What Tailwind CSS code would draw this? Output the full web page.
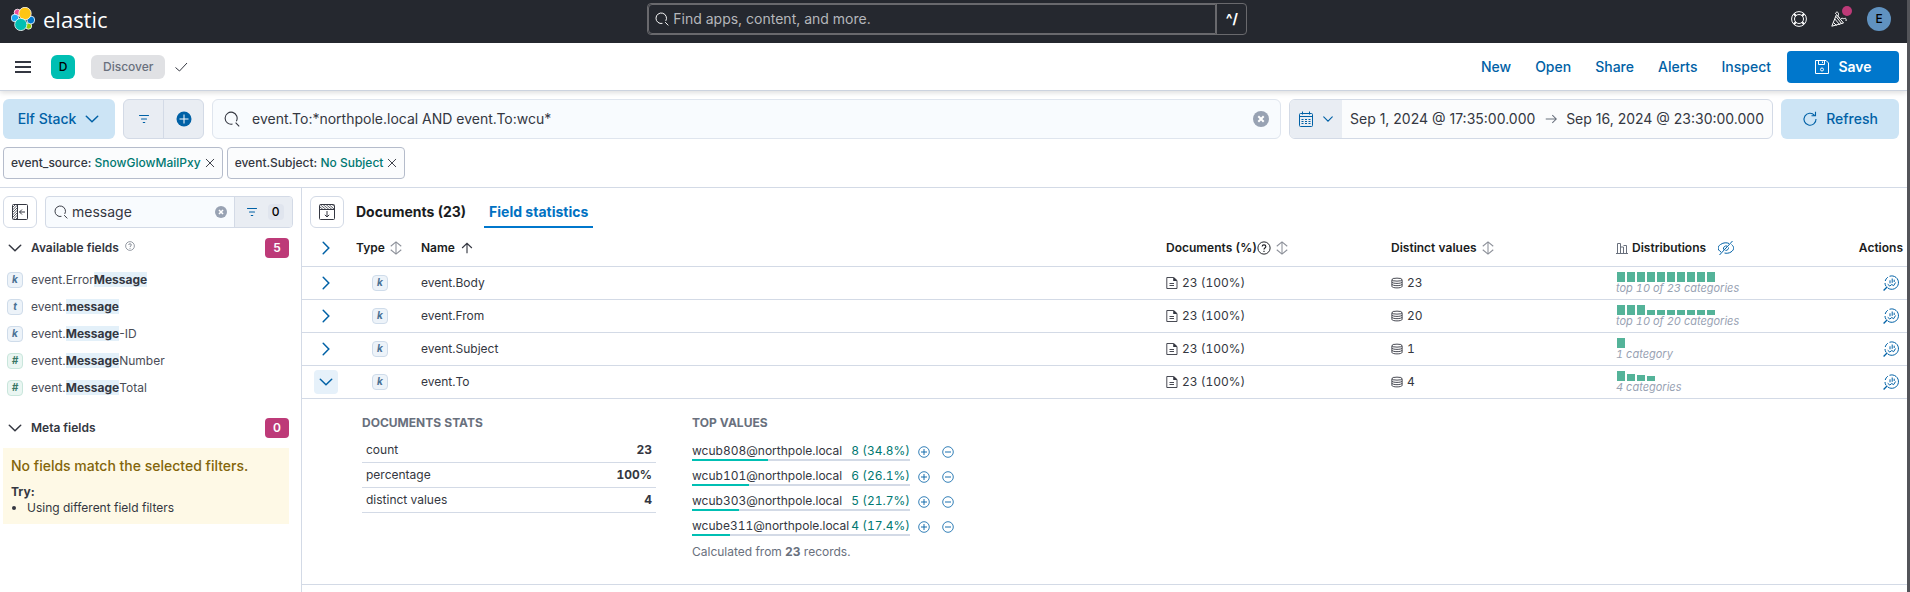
<!DOCTYPE html>
<html lang="en">
<head>
<meta charset="utf-8">
<title>Discover - Elastic</title>
<script src="https://cdn.jsdelivr.net/npm/@tailwindcss/browser@4"></script>
</head>
<body class="flex min-h-screen flex-col border-r-[3px] border-[#535459] bg-white font-['Inter',sans-serif] text-sm text-[#343741]">
<svg class="hidden">
  <defs>
    <symbol id="search" viewBox="0 0 16 16"><path fill="none" stroke="currentColor" stroke-width="1.1" d="M8.500 13A6 6 0 1 1 12.300 10.200M11.600 11.600l3.600 3.700"/></symbol>
    <symbol id="down" viewBox="0 0 16 16"><path fill="none" stroke="currentColor" stroke-width="1.5" stroke-linecap="round" d="M2.300 5.200 8 10.800l5.700-5.600"/></symbol>
    <symbol id="right" viewBox="0 0 16 16"><path fill="none" stroke="currentColor" stroke-width="1.5" stroke-linecap="round" d="M5.200 2.300 10.800 8l-5.600 5.700"/></symbol>
    <symbol id="filter" viewBox="0 0 16 16"><path fill="none" stroke="currentColor" stroke-width="1.2" stroke-linecap="round" d="M3.500 4.500h9M5.500 8h5M7.300 11.500h1.400"/></symbol>
    <symbol id="clear" viewBox="0 0 16 16"><circle cx="8" cy="8" r="8" fill="#98a2b3"/><path stroke="#fff" stroke-width="2" d="m5.300 5.300 5.400 5.400m0-5.400-5.400 5.400"/></symbol>
    <symbol id="cross" viewBox="0 0 16 16"><path stroke="currentColor" stroke-width="1.500" stroke-linecap="round" d="m2 2 12 12M14 2 2 14"/></symbol>
    <symbol id="sort" viewBox="0 0 16 16"><path fill="none" stroke="#8c9099" stroke-width="1.200" d="M8 1.500v13M2 6l6-5 6 5M2 10l6 5 6-5"/></symbol>
    <symbol id="help" viewBox="0 0 16 16"><circle cx="8" cy="8" r="7" fill="none" stroke="currentColor" stroke-width="1.100"/><path fill="none" stroke="currentColor" stroke-width="1.300" d="M5.900 6.300C6 3.700 10.100 3.800 10.100 6.300 10.100 8 8 7.900 8 9.600M8 11v1.500"/></symbol>
    <symbol id="doc" viewBox="0 0 12 12"><path fill="none" stroke="currentColor" stroke-width=".9" d="M.800.500H7.500l3.500 3v8H.800zM3.500 6.500h4.500M3.500 8.500h4.500"/><path fill="currentColor" d="M7.200.500h1l2.800 3V4H7.200z"/></symbol>
    <symbol id="db" viewBox="0 0 16 16"><g fill="none" stroke="currentColor" stroke-width="1.200"><ellipse cx="8" cy="3.500" rx="6.800" ry="2"/><path d="M1.200 3.500v9c0 2.700 13.600 2.700 13.600 0v-9M1.200 6.500c0 2.700 13.600 2.700 13.600 0M1.200 9.500c0 2.700 13.600 2.700 13.600 0"/></g></symbol>
    <symbol id="explore" viewBox="0 0 16 16"><g fill="none" stroke="currentColor"><path d="M6.500 1.300A6.700 6.700 0 1 1 4.800 13M3 11.300A6.700 6.700 0 0 1 2 8M2.200 6A6.700 6.700 0 0 1 4.800 2.200"/><path d="M4.300 11.800.6 15.500" stroke-width="1.300"/><path d="M4.700 9.300 6.800 11 8.800 9.500l1.800 1.200 2-3.200M7 5.300v3M9.200 3.500v4.300M11.200 4.700V7"/></g></symbol>
    <symbol id="plus" viewBox="0 0 12 12"><circle cx="6" cy="6" r="5.300" fill="none" stroke="currentColor" stroke-width=".8"/><path stroke="currentColor" stroke-width=".9" d="M6 3v6M3 6h6"/></symbol>
    <symbol id="minus" viewBox="0 0 12 12"><circle cx="6" cy="6" r="5.300" fill="none" stroke="currentColor" stroke-width=".8"/><path stroke="currentColor" stroke-width=".9" d="M3 6h6"/></symbol>
  </defs>
</svg>

<header class="flex h-[43px] shrink-0 items-start justify-between bg-[#25282f] pr-[16px] text-white">
  <a href="#" aria-label="Elastic" class="flex items-center gap-2 pt-[7px] pl-[11px]">
    <svg class="size-6" viewBox="0 0 24 24"><g stroke="#fff" stroke-width=".8"><circle cx="6.500" cy="5.500" r="3.300" fill="#f04e98"/><circle cx="4" cy="11" r="3.800" fill="#1ba9f5"/><circle cx="17.500" cy="19" r="3.200" fill="#93c90e"/><circle cx="19.800" cy="13" r="3.900" fill="#0077cc"/><circle cx="14" cy="6.500" r="6.200" fill="#fec514"/><circle cx="9.800" cy="17.500" r="6.100" fill="#00bfb3"/></g></svg>
    <span class="font-['Open_Sans'] text-[22px] leading-6">elastic</span>
  </a>
  <div class="mt-[3px] mr-1 flex h-8 w-[600px] rounded border border-[#69696d]">
    <label class="flex flex-1 items-center gap-1 rounded-l border border-[#69696d] pl-1.5"><svg class="size-3.5"><use href="#search"/></svg><input type="text" aria-label="Find apps, content, and more" placeholder="Find apps, content, and more." class="min-w-0 flex-1 bg-transparent text-sm outline-none placeholder:text-[#b5b7bb]"></label>
    <span class="flex w-[30px] items-center justify-center border-l border-[#69696d] text-sm font-bold">^/</span>
  </div>
  <div class="mt-[7px] flex items-center gap-6">
    <button aria-label="Help" class="size-4"><svg class="size-4" viewBox="0 0 16 16" fill="none" stroke="#fff"><circle cx="8" cy="8" r="7.400"/><circle cx="8" cy="8" r="4.500"/><path stroke-width="2" d="m2.800 2.800 2 2m6.400 6.400 2 2M13.200 2.800l-2 2m-6.400 6.400-2 2"/></svg></button>
    <button aria-label="News" class="relative size-4"><svg class="size-4" viewBox="0 0 16 16" fill="none" stroke="#fff"><path d="M.8 15.200 5.500 3.500l7 8.500zM3.800 8l5 5.800M5 5.500l5.500 7M2.500 11.500l3 3M4.500 3c0-2.500 3-2.500 3 0S6 5 8.500 6.500M10 8c1-2 2.500.5 3.500-.500s2 .5 1.500 2.500"/></svg><span class="absolute -top-[5px] -right-[5px] size-2.5 rounded-full bg-[#bd3a78]"></span></button>
    <button class="-ml-1 flex size-6 items-center justify-center rounded-full bg-[#6092c0] text-xs font-medium text-black">E</button>
  </div>
</header>

<nav class="flex h-12 shrink-0 items-center border-b border-[#ccd3df] pr-2 pl-[15px] shadow-[0_2px_5px_rgba(0,0,0,0.13)]">
  <button aria-label="Menu"><svg class="size-4" viewBox="0 0 16 16"><path stroke="#343741" stroke-width="2" d="M0 3h16M0 8h16M0 13h16"/></svg></button>
  <span class="ml-5 flex size-6 items-center justify-center rounded-md bg-[#00bfb3] text-xs font-medium text-black">D</span>
  <span class="ml-4 flex h-6 items-center rounded-md bg-[#e0e1e4] px-3 text-xs font-medium text-[#69707d]">Discover</span>
  <svg class="ml-2 size-4" viewBox="0 0 16 16"><path fill="none" stroke="#343741" d="m2.500 8.500 4 3.500L14 4"/></svg>
  <div class="ml-auto flex items-center gap-6 font-medium text-[#0061a6]">
    <a href="#">New</a><a href="#">Open</a><a href="#">Share</a><a href="#">Alerts</a><a href="#">Inspect</a>
    <button class="-ml-2 flex h-8 w-28 items-center justify-center gap-2 rounded bg-[#0077cc] font-semibold text-white"><svg class="size-4" viewBox="0 0 16 16" fill="none" stroke="#fff"><path d="M1.500 1.500h10.500L14.500 4v10.500h-13zM4.500 1.500v4h6v-4M8.500 2.500v1.500"/><circle cx="8" cy="10.500" r="1.500"/></svg>Save</button>
  </div>
</nav>

<div class="flex gap-2 pt-2 pr-2 pl-[3px]">
  <button class="flex h-10 w-28 items-center justify-center gap-2 rounded-md bg-[#cce4f5] font-medium text-[#0061a6]">Elf Stack<svg class="size-4"><use href="#down"/></svg></button>
  <div class="flex h-10 w-[81px] divide-x divide-[#d3dae6] overflow-hidden rounded-md border border-[#d3dae6] bg-[#e9edf3] text-[#0061a6]">
    <button aria-label="Filters" class="flex flex-1 items-center justify-center"><svg class="size-4"><use href="#filter"/></svg></button>
    <button aria-label="Add filter" class="flex flex-1 items-center justify-center"><svg class="size-4" viewBox="0 0 16 16"><circle cx="8" cy="8" r="7.500" fill="#0061a6"/><path stroke="#fff" d="M8 3.500v9M3.500 8h9"/></svg></button>
  </div>
  <label class="flex h-10 flex-1 items-center gap-3 rounded-md border border-[#dfe5ee] bg-[#f8fbfe] px-[11px]"><svg class="size-4"><use href="#search"/></svg><input type="text" aria-label="Query" value="event.To:*northpole.local AND event.To:wcu*" class="min-w-0 flex-1 bg-transparent outline-none"><button aria-label="Clear query"><svg class="block size-4"><use href="#clear"/></svg></button></label>
  <div class="flex h-10 w-[484px] overflow-hidden rounded-md border border-[#d3dae6] bg-[#fbfcfd]">
    <button aria-label="Date quick menu" class="flex w-[52px] items-center justify-center gap-2 bg-[#e9edf3] text-[#0061a6]"><svg class="size-4" viewBox="0 0 16 16" fill="none" stroke="currentColor"><rect x="1.500" y="2.500" width="13" height="13" rx="1"/><path d="M1.500 5.500h13M4.500 .500v3M11.500 .500v3"/><path stroke-dasharray="2 1.500" d="M3.500 8.500h9M3.500 10.500h9M3.500 12.500h9"/></svg><svg class="size-3"><use href="#down"/></svg></button>
    <div class="flex flex-1 items-center justify-between px-2"><button>Sep 1, 2024 @ 17:35:00.000</button><svg class="size-3.5" viewBox="0 0 16 16"><path fill="none" stroke="#69707d" stroke-width="1.200" d="M2 8h12M9.500 3.500 14 8l-4.500 4.500"/></svg><button>Sep 16, 2024 @ 23:30:00.000</button></div>
  </div>
  <button class="flex h-10 w-[118px] items-center justify-center gap-2 rounded-md bg-[#cce4f5] font-medium text-[#0061a6]"><svg class="size-4" viewBox="0 0 16 16"><path fill="none" stroke="currentColor" stroke-width="1.100" d="M12.500 4.300A6 6 0 1 0 14 8M13.500 .800v4H9.500"/></svg>Refresh</button>
</div>

<div class="flex gap-1 border-b border-[#d3dae6] px-[3px] py-2 text-xs font-medium">
  <span class="flex h-8 items-center gap-1 rounded-sm border border-[#b5bccb] bg-[#fbfcfd] px-[7px]">
    <span>event_source: <span class="text-[#007871]">SnowGlowMailPxy</span></span><button aria-label="Remove event_source filter"><svg class="block size-2.5"><use href="#cross"/></svg></button></span>
  <span class="flex h-8 items-center gap-1 rounded-sm border border-[#b5bccb] bg-[#fbfcfd] px-[7px]">
    <span>event.Subject: <span class="text-[#007871]">No Subject</span></span><button aria-label="Remove event.Subject filter"><svg class="block size-2.5"><use href="#cross"/></svg></button></span>
</div>

<div class="flex flex-1 text-xs">
  <aside class="w-[302px] shrink-0 border-r border-[#d3dae6] pt-2 pl-[3px]">
    <div class="flex gap-2 pr-2">
      <button aria-label="Hide sidebar" class="flex h-8 w-[34px] shrink-0 items-center justify-center rounded-md border border-[#d3dae6]"><svg class="size-4" viewBox="0 0 16 16" fill="none" stroke="#343741"><path stroke-width=".8" d="M.5 3.500l3-3M.5 6l5-5M.5 8.500l5-5M.5 11l5-5M.5 13.500l5-5M1.500 15l4-4M4 15l1.500-1.500"/><rect x=".5" y=".5" width="15" height="15" rx="1"/><path d="M5.500 .500v15M7.500 8H13M10 5.500 7.500 8l2.500 2.500"/></svg></button>
      <div class="flex h-8 min-w-0 flex-1 overflow-hidden rounded border border-[#d3dae6] bg-[#f8fbfe]">
        <label class="flex min-w-0 flex-1 items-center gap-1 pr-[7px] pl-2"><svg class="size-3.5 shrink-0"><use href="#search"/></svg><input type="text" aria-label="Search field names" value="message" class="min-w-0 flex-1 bg-transparent text-sm outline-none"><button aria-label="Clear"><svg class="block size-3"><use href="#clear"/></svg></button></label>
        <button class="flex w-[58px] shrink-0 items-center justify-center gap-2 border-l border-[#d3dae6] bg-[#e9edf3] font-medium text-black"><svg class="size-4 text-[#0061a6]"><use href="#filter"/></svg><span class="flex h-4 w-4 items-center justify-center rounded-sm bg-[#e0e5ee]">0</span></button>
      </div>
    </div>
    <div class="mt-2.5 mr-3 flex h-5 items-center pl-1 font-semibold">
      <svg class="mr-2 size-4"><use href="#down"/></svg>Available fields<svg class="mb-1 ml-1.5 size-2.5 text-[#69707d]"><use href="#help"/></svg><span class="ml-auto flex h-5 w-6 items-center justify-center rounded bg-[#bd3a78] text-white">5</span>
    </div>
    <ul class="mt-2 pl-1 text-[#4a4d57]">
      <li class="flex h-[27px] items-center gap-2"><span class="flex size-4 items-center justify-center rounded-sm border border-[#cfdcea] bg-[#edf3f9] text-[10px] font-bold text-[#4a7194] italic">k</span><span>event.Error<mark class="bg-[#e3f0f9] font-bold text-[#343741]">Message</mark></span></li>
      <li class="flex h-[27px] items-center gap-2"><span class="flex size-4 items-center justify-center rounded-sm border border-[#cfdcea] bg-[#edf3f9] text-[10px] font-bold text-[#4a7194] italic">t</span><span>event.<mark class="bg-[#e3f0f9] font-bold text-[#343741]">message</mark></span></li>
      <li class="flex h-[27px] items-center gap-2"><span class="flex size-4 items-center justify-center rounded-sm border border-[#cfdcea] bg-[#edf3f9] text-[10px] font-bold text-[#4a7194] italic">k</span><span>event.<mark class="bg-[#e3f0f9] font-bold text-[#343741]">Message</mark>-ID</span></li>
      <li class="flex h-[27px] items-center gap-2"><span class="flex size-4 items-center justify-center rounded-sm border border-[#c9e6dc] bg-[#eaf6f2] text-[10px] font-bold text-[#387765] italic">#</span><span>event.<mark class="bg-[#e3f0f9] font-bold text-[#343741]">Message</mark>Number</span></li>
      <li class="flex h-[27px] items-center gap-2"><span class="flex size-4 items-center justify-center rounded-sm border border-[#c9e6dc] bg-[#eaf6f2] text-[10px] font-bold text-[#387765] italic">#</span><span>event.<mark class="bg-[#e3f0f9] font-bold text-[#343741]">Message</mark>Total</span></li>
    </ul>
    <div class="mt-[17px] mr-3 flex h-5 items-center pl-1 font-semibold">
      <svg class="mr-2 size-4"><use href="#down"/></svg>Meta fields<span class="ml-auto flex h-5 w-6 items-center justify-center rounded bg-[#bd3a78] text-white">0</span>
    </div>
    <div class="mt-2.5 mr-3 bg-[#fef9e6] px-2 py-2">
      <p class="text-sm leading-5 font-medium text-[#83650a]">No fields match the selected filters.</p>
      <p class="mt-2 leading-4 font-bold">Try:</p>
      <ul class="list-disc pl-4 leading-4"><li>Using different field filters</li></ul>
    </div>
  </aside>

  <main class="min-w-0 flex-1 pt-2">
    <div class="flex pl-2 text-sm font-bold">
      <button aria-label="Hide chart" class="mr-3 flex h-8 w-[34px] items-center justify-center rounded-md border border-[#d3dae6]"><svg class="size-4" viewBox="0 0 16 16" fill="none" stroke="#343741"><path stroke-width=".8" d="M1 3l3 2.500M1 .500l6 5M4 .500l6 5M7 .500l6 5M10 .500l5 4.500M13 .500l2 1.500"/><rect x=".5" y=".5" width="15" height="15" rx="1"/><path d="M.5 5.500h15M8 7v6M5.800 10.800 8 13l2.200-2.200"/></svg></button>
      <button class="mr-[18px] h-8 text-[#1a1c21]">Documents (23)</button>
      <button class="h-8 border-b-2 border-[#0077cc] px-[5px] pt-0.5 text-[#0071c2]">Field statistics</button>
    </div>
    <table class="w-full table-fixed text-left tabular-nums">
      <colgroup><col class="w-[46px]"><col class="w-[65px]"><col><col class="w-[225px]"><col class="w-[225px]"><col class="w-[225px]"><col class="w-[74px]"></colgroup>
      <thead>
        <tr class="h-[38px] border-b border-[#d3dae6] text-[#1a1c21] [&>th]:pt-0.5 [&>th]:font-semibold">
          <th class="pl-4"><button aria-label="Expand all" class="block"><svg class="block size-4 text-[#0061a6]"><use href="#right"/></svg></button></th>
          <th class="pl-2"><button class="flex items-center gap-1">Type<svg class="size-3.5"><use href="#sort"/></svg></button></th>
          <th class="pl-2"><button class="flex items-center gap-1.5">Name<svg class="size-3" viewBox="0 0 16 16"><path fill="none" stroke="#343741" stroke-width="1.500" d="M8 15V2M1.500 8 8 1.700 14.500 8"/></svg></button></th>
          <th class="pl-2"><button class="flex items-center">Documents (%)<svg class="size-3.5"><use href="#help"/></svg><svg class="ml-1 size-3.5"><use href="#sort"/></svg></button></th>
          <th class="pl-2"><button class="flex items-center gap-1">Distinct values<svg class="size-3.5"><use href="#sort"/></svg></button></th>
          <th class="pl-2"><div class="flex items-center"><svg class="mr-1 size-3" viewBox="0 0 12 12" fill="none" stroke="#69707d"><path d="M0 11.500h12M1.500 11V1.500h3V11M4.500 5h3v6M7.500 3.500h3V11"/></svg>Distributions<button aria-label="Hide distributions" class="ml-3 text-[#0061a6]"><svg class="block size-4" viewBox="0 0 16 16" fill="none" stroke="currentColor"><path d="M3 12C-1 9.500-.5 6.500 2.500 4.500 5.500 2.300 9 2.500 11 3.500M13.500 4.500c3 2.500 3 5-.5 7.500-2 1.300-4.500 1.500-6.500 1M1.500 15 14.500 1M5.500 9.500C5 7 7 5.500 9 6M10.500 7.500C10.800 9 9.500 10.500 7.500 10.500"/></svg></button></div></th>
          <th class="pr-1 text-right">Actions</th>
        </tr>
      </thead>
      <tbody id="rows"></tbody>
      <tbody>
        <tr class="h-[186px] border-b border-[#d3dae6] align-top">
          <td colspan="7" class="pt-4 pl-[60px]">
            <div class="flex gap-9">
              <section class="w-[294px]">
                <h3 class="leading-4 font-bold text-[#69707d]">DOCUMENTS STATS</h3>
                <table class="mt-[7px] w-full">
                  <tr class="h-[25px] border-b border-[#d3dae6]"><th class="pl-1 font-normal" scope="row">count</th><td class="pr-1 text-right font-bold">23</td></tr>
                  <tr class="h-[25px] border-b border-[#d3dae6]"><th class="pl-1 font-normal" scope="row">percentage</th><td class="pr-1 text-right font-bold">100%</td></tr>
                  <tr class="h-[25px] border-b border-[#d3dae6]"><th class="pl-1 font-normal" scope="row">distinct values</th><td class="pr-1 text-right font-bold">4</td></tr>
                </table>
              </section>
              <section>
                <h3 class="leading-4 font-bold text-[#69707d]">TOP VALUES</h3>
                <div id="values" class="mt-[9px]"></div>
                <p class="mt-1 leading-4 text-[#69707d]">Calculated from <b class="font-bold">23</b> records.</p>
              </section>
            </div>
          </td>
        </tr>
      </tbody>
    </table>
  </main>
</div>

<script>
const rows = [
  ['event.Body', 23, 'top 10 of 23 categories', [10,10,10,10,10,10,10,10,10,10]],
  ['event.From', 20, 'top 10 of 20 categories', [10,10,10,5,5,5,5,5,5,5]],
  ['event.Subject', 1, '1 category', [10]],
  ['event.To', 4, '4 categories', [10,7,6,5]],
];
document.getElementById('rows').innerHTML = rows.map(([name, n, label, bars], i) => `
  <tr class="h-[33px] border-b border-[#d3dae6]">
    <td class="pl-3"><button aria-label="Toggle ${name}" class="flex size-6 items-center justify-center rounded text-[#0061a6] ${i === 3 ? 'bg-[#e6f1fa]' : ''}"><svg class="size-4"><use href="#${i === 3 ? 'down' : 'right'}"/></svg></button></td>
    <td class="pl-6"><span class="flex size-4 items-center justify-center rounded-sm border border-[#cfdcea] bg-[#edf3f9] text-[10px] font-bold text-[#4a7194] italic">k</span></td>
    <td class="pl-2">${name}</td>
    <td class="pl-2"><div class="flex items-center gap-1"><svg class="size-3"><use href="#doc"/></svg>23 (100%)</div></td>
    <td class="pl-2"><div class="flex items-center gap-1"><svg class="size-3"><use href="#db"/></svg>${n}</div></td>
    <td class="pl-2"><div class="flex h-[10px] items-end gap-0.5 pl-px">${bars.map(b => `<i class="w-2 bg-[#54b399]" style="height:${b}px"></i>`).join('')}</div><div class="text-[11px] leading-3 text-[#98a2b3] italic">${label}</div></td>
    <td class="pr-2"><button aria-label="Explore ${name}" class="ml-auto block text-[#0061a6]"><svg class="block size-4"><use href="#explore"/></svg></button></td>
  </tr>`).join('');
const values = [['wcub808@northpole.local', '8 (34.8%)', 34.8], ['wcub101@northpole.local', '6 (26.1%)', 26.1], ['wcub303@northpole.local', '5 (21.7%)', 21.7], ['wcube311@northpole.local', '4 (17.4%)', 17.4]];
document.getElementById('values').innerHTML = values.map(([v, c, p]) => `
  <div class="flex h-[25px] items-center gap-1.5">
    <div class="w-[218px]"><div class="flex justify-between leading-4 whitespace-nowrap"><span>${v}</span><span class="text-[#007871]">${c}</span></div><div class="h-0.5 bg-[#d3dae6]"><div class="h-0.5 bg-[#00bfb3]" style="width:${p}%"></div></div></div>
    <button aria-label="Filter for ${v}" class="ml-0.5 text-[#0061a6]"><svg class="block size-3"><use href="#plus"/></svg></button>
    <button aria-label="Filter out ${v}" class="ml-1.5 text-[#0061a6]"><svg class="block size-3"><use href="#minus"/></svg></button>
  </div>`).join('');
</script>
</body>
</html>
